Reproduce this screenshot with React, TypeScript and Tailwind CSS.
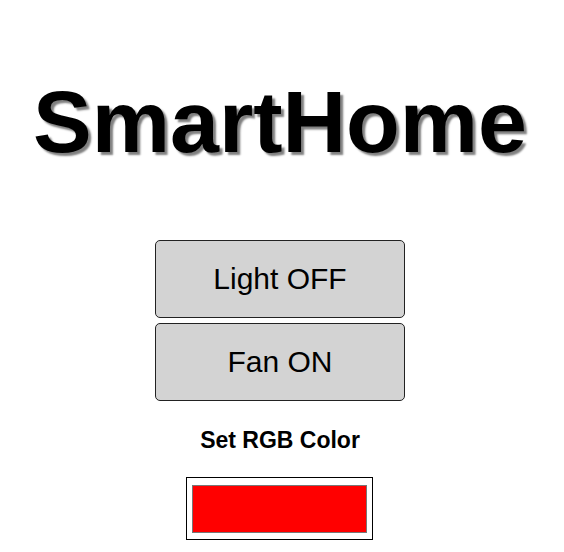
export default function App() {
  return (
    <div className="w-[560px] flex flex-col items-center bg-white font-['Liberation_Sans',Arial,sans-serif] text-black">
      <h1 className="mt-[73px] text-[88px] leading-[98px] font-bold [text-shadow:3px_3px_2px_#808080]">
        SmartHome
      </h1>

      <div className="mt-[69px] flex flex-col gap-[5px]">
        <button className="w-[250px] h-[78px] rounded-[5px] border border-[#222] bg-[#d3d3d3] text-[30px] pb-[2px]">
          Light OFF
        </button>
        <button className="w-[250px] h-[78px] rounded-[5px] border border-[#222] bg-[#d3d3d3] text-[30px] pb-[2px]">
          Fan ON
        </button>
      </div>

      <p className="mt-[26px] text-[23px] leading-[26px] font-bold">Set RGB Color</p>

      <div className="mt-[24px] mr-[1px] w-[187px] h-[63px] border border-black bg-white px-[5px] pt-[7px] pb-[6px]">
        <div className="w-full h-full bg-[#ff0000] border border-[#777]" />
      </div>
    </div>
  );
}
